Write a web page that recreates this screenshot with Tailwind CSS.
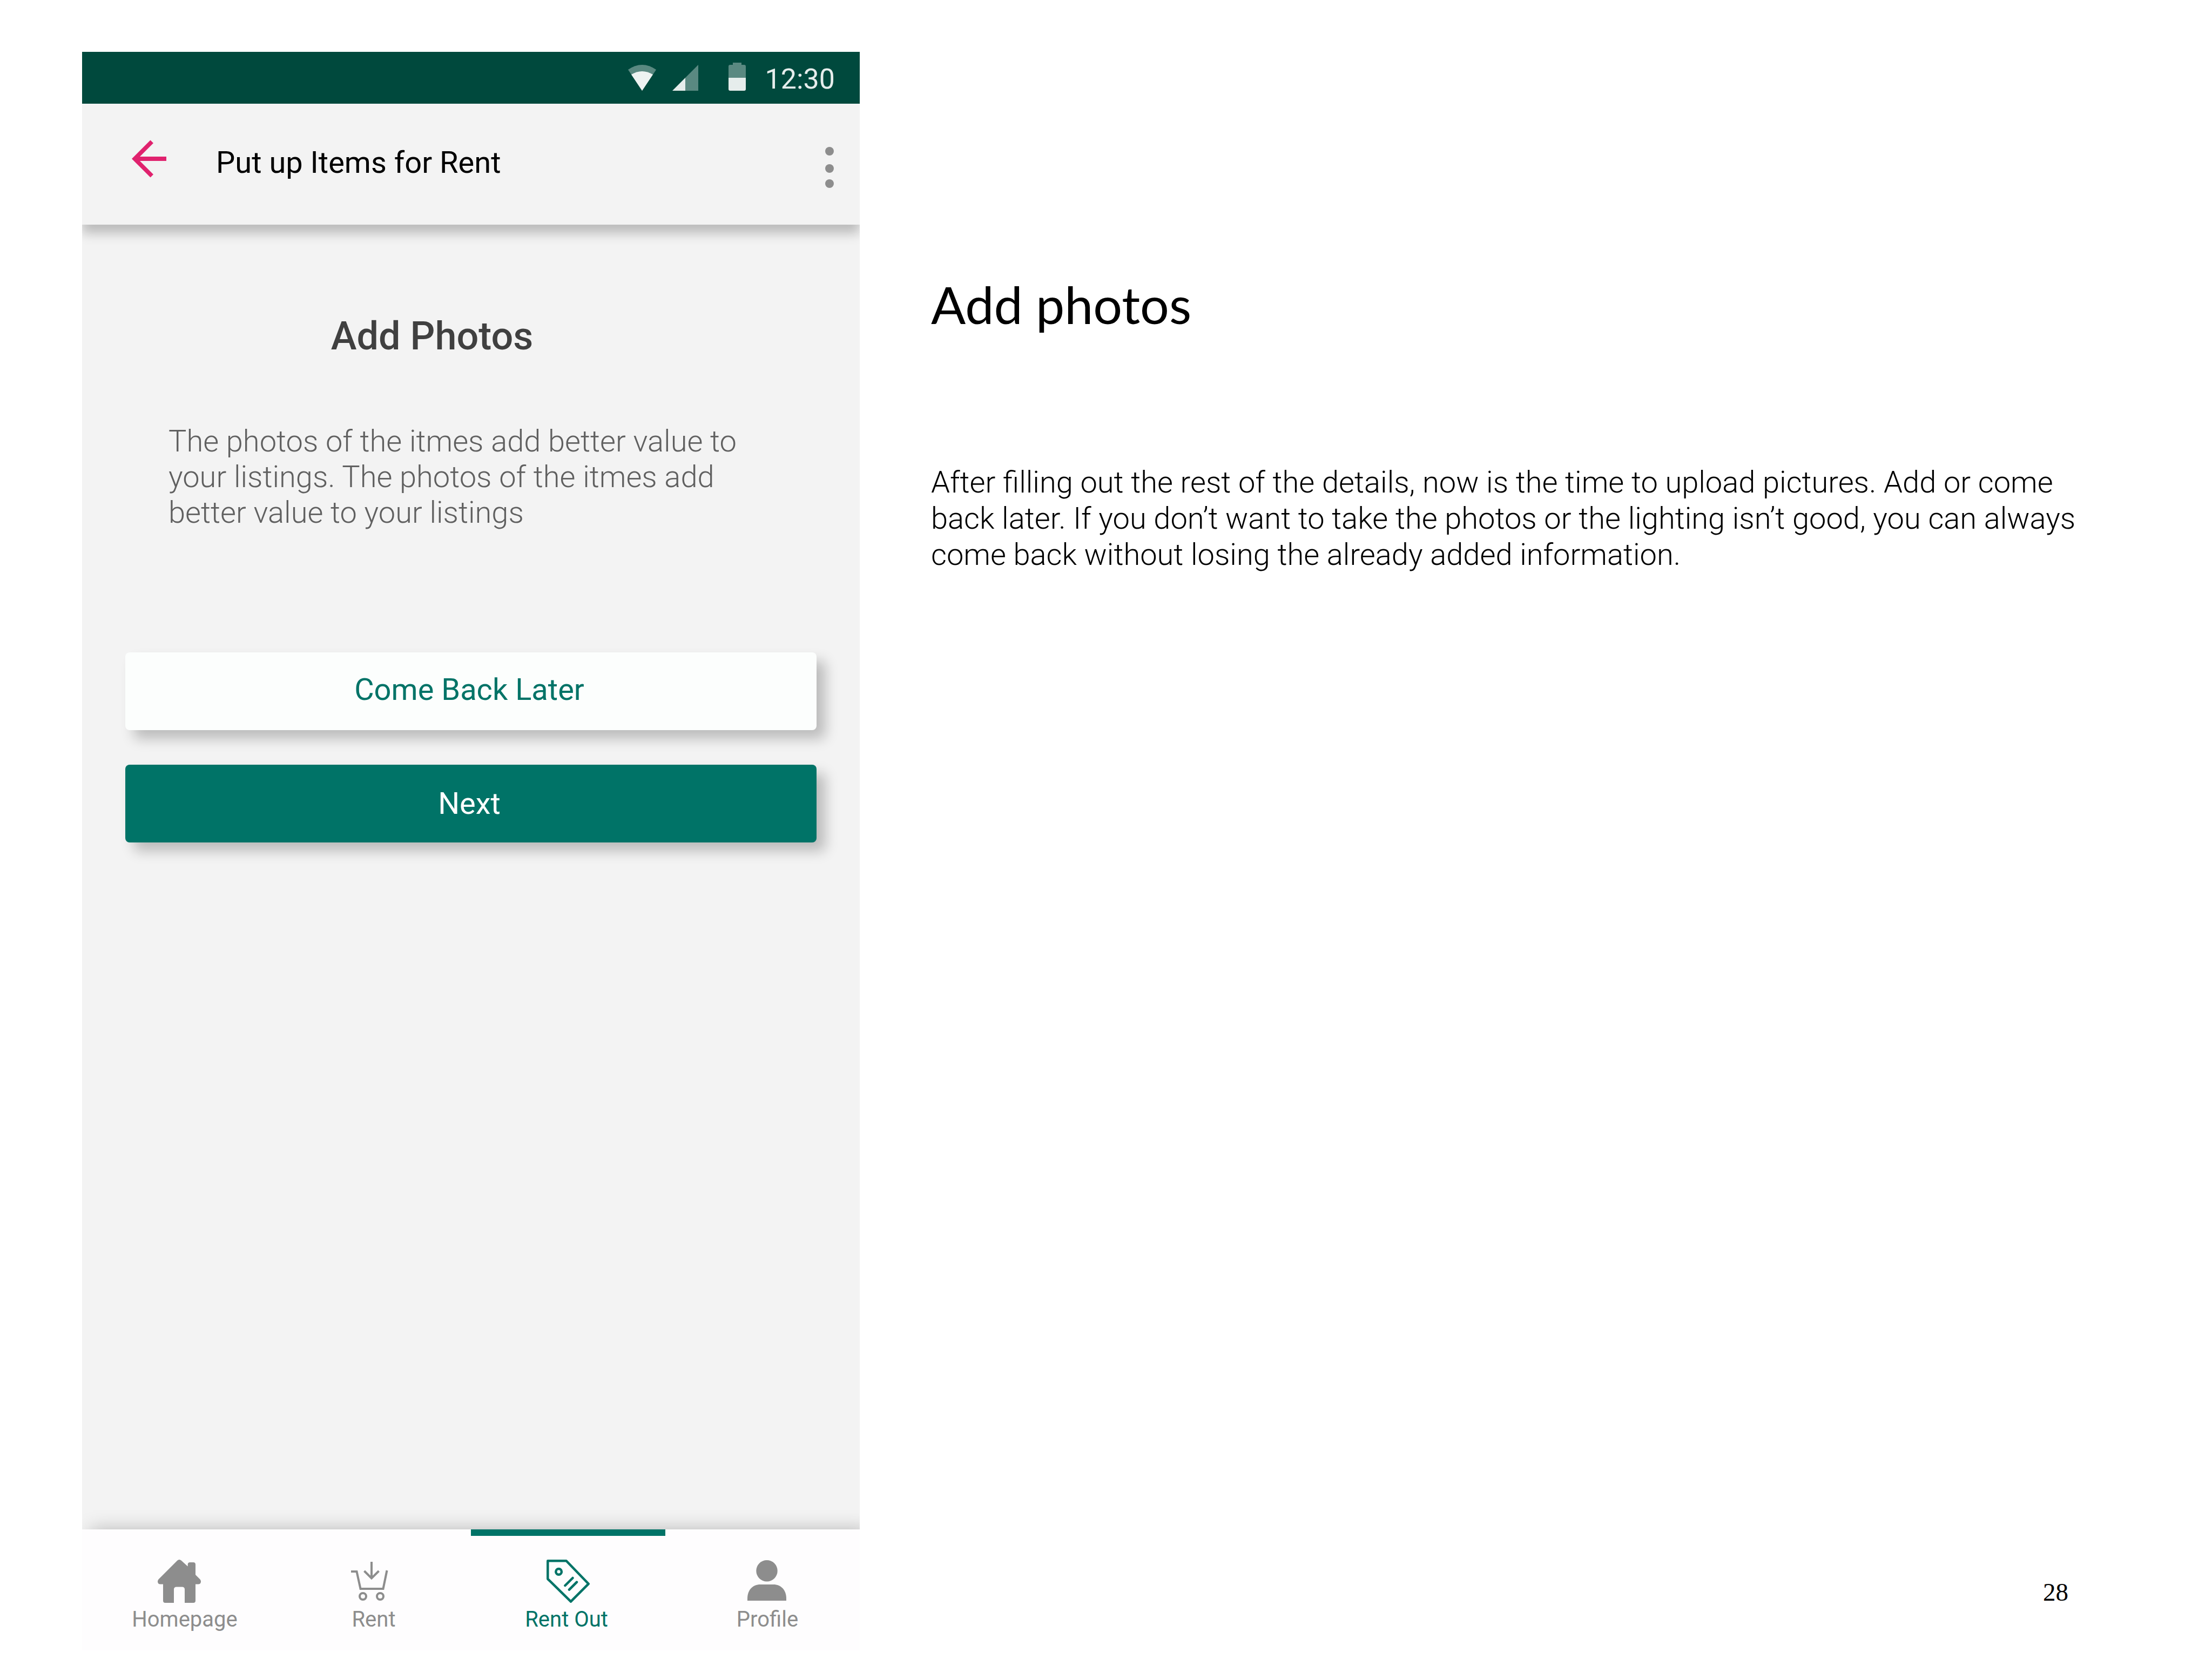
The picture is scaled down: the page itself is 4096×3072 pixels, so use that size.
<!DOCTYPE html>
<html lang="en">
<head>
<meta charset="utf-8">
<meta name="viewport" content="width=device-width, initial-scale=1">
<title>Add photos</title>
<script src="https://cdn.jsdelivr.net/npm/@tailwindcss/browser@4"></script>
</head>
<body class="bg-white">
<div class="grid min-h-screen grid-cols-[180fr_313fr] pt-24 pb-4 pl-[152px] font-[Roboto,sans-serif] text-black">

  <!-- Phone screen -->
  <section class="flex flex-col overflow-hidden bg-[#f3f3f3]" aria-label="App screen">
    <div class="flex h-24 items-end justify-end bg-[#00493d] pr-[46px] pb-6 text-white/90">
      <svg class="mr-[30px] h-[52px] w-[52px]" viewBox="0 0 52 52" fill="currentColor" aria-hidden="true">
        <path fill-opacity=".39" d="M26 52 0 13Q26-5 52 13Z"/>
        <path d="M26 52 6 22Q26 10 46 22Z"/>
      </svg>
      <svg class="mr-14 h-[52px] w-12" viewBox="0 0 48 52" fill="currentColor" aria-hidden="true">
        <path fill-opacity=".39" d="M24 28 48 4V52H24Z"/>
        <path d="M0 52 24 28V52Z"/>
      </svg>
      <svg class="mr-9 h-[52px] w-8" viewBox="0 0 32 52" fill="currentColor" aria-hidden="true">
        <path fill-opacity=".39" d="M8 0H24V4H29Q32 4 32 7V28H0V7Q0 4 3 4H8Z"/>
        <path d="M0 28H32V49Q32 52 29 52H3Q0 52 0 49Z"/>
      </svg>
      <time class="text-[52px] leading-[42px]">12:30</time>
    </div>

    <header class="relative z-10 flex h-56 items-start bg-[#f3f3f3] pt-[66px] pr-12 pl-[92px] shadow-[0_16px_20px_rgb(0_0_0/0.23)]">
      <button type="button" aria-label="Back" class="text-[#e0226e]">
        <svg class="block h-[72px] w-16" viewBox="0 0 64 72" fill="currentColor" aria-hidden="true">
          <path d="M0 36 34.5 1.5 40 7 15 32H64V40H15L40 65 34.5 70.5Z"/>
        </svg>
      </button>
      <h1 class="ml-[92px] text-[56px] leading-[86px]">Put up Items for Rent</h1>
      <button type="button" aria-label="More options" class="ml-auto text-[#8d8d8d]">
        <svg class="block h-[104px] w-4" viewBox="0 0 16 104" fill="currentColor" aria-hidden="true">
          <circle cx="8" cy="22" r="8"/><circle cx="8" cy="54" r="8"/><circle cx="8" cy="82" r="8"/>
        </svg>
      </button>
    </header>

    <main class="flex-1 px-20 pt-[163px]">
      <div class="pr-36">
        <h2 class="text-center text-[72px] leading-[88px] font-medium text-[#404040]">Add Photos</h2>
        <p class="mt-[117px] pl-20 text-[56px] leading-[66px] font-light text-[#606060]">The photos of the itmes add better value to your listings. The photos of the itmes add better value to your listings</p>
      </div>
      <div class="mt-[226px] flex flex-col gap-16 text-[56px]">
        <button type="button" class="h-36 rounded-lg bg-[#fcfefd] pr-1.5 pb-1.5 text-[#007367] shadow-[16px_16px_24px_rgb(0_0_0/0.23)]">Come Back Later</button>
        <button type="button" class="h-36 rounded-lg bg-[#007367] pr-1.5 text-white shadow-[16px_16px_24px_rgb(0_0_0/0.23)]">Next</button>
      </div>
    </main>

    <nav class="relative z-10 grid h-56 grid-cols-4 bg-[#fefdfe] text-[40px] leading-[48px] text-[#8d8d8d] shadow-[16px_0_32px_rgb(0_0_0/0.25)]" aria-label="Main">
      <a href="#home" class="flex flex-col items-center pt-14">
        <svg class="size-20" viewBox="0 0 80 80" fill="currentColor" aria-hidden="true">
          <path d="M36.5 1.5Q40-1.5 43.5 1.5L55.7 12.5V9Q55.7 5 60 5H66Q70 5 70 9V28L78.5 36.5Q80 38.5 80 41 79.5 45.5 75 45.5H70V76Q70 80 66 80H50V55Q50 50.5 45 50.5H35Q30 50.5 30 55V80H14Q10 80 10 76V45.5H5Q.5 45.5 0 41 0 38.5 1.5 36.5Z"/>
        </svg>
        <span class="mt-[7px] pl-5">Homepage</span>
      </a>
      <a href="#rent" class="flex flex-col items-center pt-14">
        <svg class="h-20 w-24" viewBox="0 0 96 80" fill="none" stroke="currentColor" stroke-width="4" aria-hidden="true">
          <path d="M44 4V34M30.5 21 44 34.500 57.500 21M6 22H16.500L23.500 54H65.500L72.500 20"/>
          <circle cx="28" cy="68" r="6"/><circle cx="60" cy="68" r="6"/>
        </svg>
        <span class="mt-[7px]">Rent</span>
      </a>
      <a href="#rent-out" aria-current="page" class="flex flex-col items-center border-t-12 border-[#007367] pt-11 text-[#007367]">
        <svg class="size-20" viewBox="0 0 80 80" fill="none" stroke="currentColor" stroke-width="4.500" stroke-linejoin="round" stroke-linecap="round" aria-hidden="true">
          <path d="M2.300 2.300H36.600L77.700 44.800 45 77.700 2.300 35.800ZM48.500 34 34.400 48M56 41.600 42 55.700"/>
          <circle cx="22.600" cy="22.400" r="5.300"/>
        </svg>
        <span class="mt-[7px] pr-1.5">Rent Out</span>
      </a>
      <a href="#profile" class="flex flex-col items-center pt-14 pl-4">
        <svg class="size-20" viewBox="0 0 80 80" fill="currentColor" aria-hidden="true">
          <circle cx="40" cy="20.700" r="19.700"/>
          <path d="M4 76V72C4 56 14 46 28 46H52C66 46 76 56 76 72V76Z"/>
        </svg>
        <span class="mt-[7px] pl-0.5">Profile</span>
      </a>
    </nav>
  </section>

  <!-- Page notes -->
  <article class="flex flex-col pt-[411px] pr-60 pb-20 pl-[132px]">
    <h2 class="font-[Lato,sans-serif] text-[95px] leading-[112px]">Add photos</h2>
    <p class="mt-[241px] text-[56px] leading-[67px] font-light">After filling out the rest of the details, now is the time to upload pictures. Add or come back later. If you don’t want to take the photos or the lighting isn’t good, you can always come back without losing the already added information.</p>
    <footer class="mt-auto pr-[26px] text-right font-['Liberation_Serif',serif] text-[47px] leading-[56px]">28</footer>
  </article>
</div>
</body>
</html>
